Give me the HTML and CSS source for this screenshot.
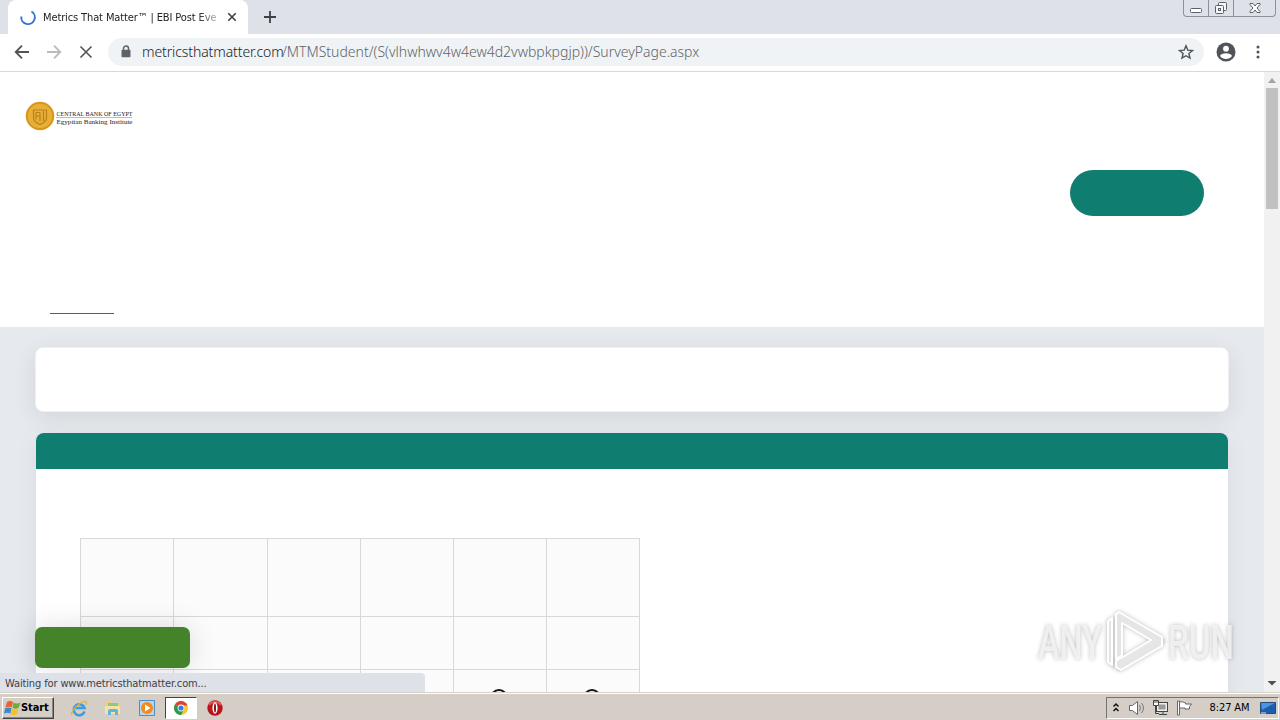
FILE: index.html
```html
<!DOCTYPE html>
<html lang="en">
<head>
    <meta charset="UTF-8">
    <title>Metrics That Matter™ | EBI Post Event</title>
    <link rel="stylesheet" href="styles.css">
</head>
<body>
    <div class="tabstrip">
        <div class="tab">
            <svg class="spinner" width="18" height="18" viewBox="0 0 18 18"><path d="M2.300 8.500A6.800 6.800 0 1 0 12.500 3.500" fill="none" stroke="#2f72d8" stroke-width="1.900"/></svg>
            <span class="tab-title">Metrics That Matter™ | EBI Post Eve</span>
            <svg width="10" height="10" viewBox="0 0 10 10"><path d="M1.300 1.300l7.400 7.400M8.700 1.300L1.300 8.700" stroke="#3c4043" stroke-width="1.600"/></svg>
        </div>
        <svg class="new-tab" width="12" height="12" viewBox="0 0 12 12"><path d="M6 0v12M0 6h12" stroke="#3c4043" stroke-width="1.800"/></svg>
        <div class="window-buttons">
            <span class="win-btn"><svg width="13" height="16" viewBox="0 0 13 16"><rect x="0.500" y="8.500" width="11" height="4" rx="1" fill="#fff" stroke="#596069"/></svg></span>
            <span class="win-btn"><svg width="14" height="16" viewBox="0 0 14 16"><g fill="#f5f6f8" stroke="#596069"><rect x="4.500" y="2.500" width="8" height="8" rx="1"/><rect x="1.500" y="5.500" width="8" height="8" rx="1"/><rect x="4.500" y="8.500" width="2" height="2"/></g></svg></span>
            <span class="win-btn close"><svg width="14" height="16" viewBox="0 0 14 16"><path d="M2 3.500h3l2 2.500 2-2.500h3v1L9 8l3 3.500v1H9L7 10l-2 2.500H2v-1L5 8 2 4.500z" fill="#fff" stroke="#596069"/></svg></span>
        </div>
    </div>

    <div class="toolbar">
        <svg width="16" height="16" viewBox="0 0 16 16"><path d="M15 8H2M8 1.700L1.700 8 8 14.300" fill="none" stroke="#505357" stroke-width="1.800"/></svg>
        <svg width="16" height="16" viewBox="0 0 16 16"><path d="M1 8h13M8 1.700L14.300 8 8 14.300" fill="none" stroke="#b9bbbe" stroke-width="1.800"/></svg>
        <svg width="16" height="16" viewBox="0 0 16 16"><path d="M2.500 2.500l11 11M13.500 2.500l-11 11" stroke="#505357" stroke-width="1.600"/></svg>
        <div class="omnibox">
            <svg width="10" height="13" viewBox="0 0 10 13"><path d="M2.500 6V3.500a2.500 2.500 0 0 1 5 0V6" fill="none" stroke="#5f6368" stroke-width="1.500"/><rect x="0.500" y="4.700" width="9" height="7.500" rx="1" fill="#5f6368"/></svg>
            <span class="url"><b>metricsthatmatter.com</b><i>/MTMStudent/(S(vlhwhwv4w4ew4d2vwbpkpgjp))/SurveyPage.aspx</i></span>
            <svg class="star" width="16" height="16" viewBox="0 0 16 16"><path d="M8 1.800l1.800 4.300 4.700.4-3.600 3 1.100 4.600L8 11.700l-4 2.400 1.100-4.600-3.600-3 4.700-.4z" fill="none" stroke="#505357" stroke-width="1.400"/></svg>
        </div>
        <svg class="avatar" width="20" height="20" viewBox="0 0 20 20"><circle cx="10" cy="10" r="9.500" fill="#505357"/><circle cx="10" cy="6.700" r="2.900" fill="#fff"/><path d="M4 14c1-3.600 11-3.600 12 0a7.500 7.500 0 0 1-12 0z" fill="#fff"/></svg>
        <svg class="menu" width="4" height="16" viewBox="0 0 4 16"><g fill="#505357"><circle cx="2" cy="3" r="1.500"/><circle cx="2" cy="8" r="1.500"/><circle cx="2" cy="13" r="1.500"/></g></svg>
    </div>

    <div class="viewport">
        <div class="page">
            <header class="site-header">
                <svg width="115" height="32" viewBox="0 0 115 32">
                    <circle cx="15" cy="16" r="14.300" fill="#d99a20"/>
                    <circle cx="15" cy="16" r="12.800" fill="#e8af36" stroke="#d4941f"/>
                    <path d="M8.500 10h13v8c0 3-3 5-6.500 6.500-3.500-1.500-6.500-3.500-6.500-6.500zM11 12.500h4M11 12.500v7M11 16h4M18.500 11v10M15 12.500V21" fill="none" stroke="#bd7f18" stroke-width="1.200"/>
                    <path d="M31 17.500h76" stroke="#aaa" stroke-width="0.800"/>
                    <text class="logo-text" x="31.500" y="15.500" textLength="76" lengthAdjust="spacingAndGlyphs">CENTRAL BANK OF EGYPT</text>
                    <text class="logo-text" x="31.500" y="24" textLength="76" lengthAdjust="spacingAndGlyphs">Egyptian Banking Institute</text>
                </svg>
            </header>
            <div class="actions"><span class="pill"></span></div>
            <div class="links"><span class="link-line"></span></div>
            <main class="survey">
                <div class="intro"></div>
                <section class="question">
                    <div class="question-head"></div>
                    <div class="grid">
                        <span></span><span></span><span></span><span></span><span></span><span></span>
                        <span></span><span></span><span></span><span></span><span></span><span></span>
                        <span></span><span></span><span></span><span></span><span><i class="radio"></i></span><span><i class="radio"></i></span>
                    </div>
                </section>
            </main>
        </div>
        <div class="scrollbar">
            <svg width="16" height="16" viewBox="0 0 16 16"><path d="M4 11l4-5 4 5z" fill="#a3a3a3"/></svg>
            <div class="thumb"></div>
            <svg class="down" width="16" height="16" viewBox="0 0 16 16"><path d="M3.500 5h9L8 9.500z" fill="#505050"/></svg>
        </div>
        <div class="floating-button"></div>
        <div class="status">Waiting for www.metricsthatmatter.com...</div>
        <svg class="watermark" width="204" height="72" viewBox="0 0 204 72">
            <g fill="none" stroke="#c8c8c8" stroke-opacity=".3" stroke-width="7" stroke-linejoin="round"><path d="M85 10l43 26-43 27zM76 15v40l6 7"/></g>
            <g fill="#fff" fill-opacity=".5" stroke="#fff" stroke-width="2" stroke-linejoin="round"><path d="M85 7l43 25v9L87 65l-5-3v-6l35-21-29-17v32l-6 4V9zM78 13l-4 3v41l4 3z"/></g>
            <text class="mark" x="4" y="54" textLength="64" lengthAdjust="spacingAndGlyphs">ANY</text>
            <text class="mark" x="134" y="54" textLength="66" lengthAdjust="spacingAndGlyphs">RUN</text>
        </svg>
    </div>

    <div class="taskbar">
        <div class="start">
            <svg width="17" height="16" viewBox="0 0 17 16"><path d="M3 2q3-2 6 0L7.800 7.500q-3-1.500-6.300 0z" fill="#e5652c"/><path d="M9.500 2.500q3 2 7 0L14.500 8q-3 1.500-6 0z" fill="#6fae35"/><path d="M1.200 8.300q3-1.500 6.300 0L6.300 13.500q-3-1.500-6.300 0z" fill="#3d87cf"/><path d="M8.200 8.800q3 1.500 6.100 0L12.800 14.500q-3 1.500-6 0z" fill="#f3c02f"/></svg>
            <span>Start</span>
        </div>
        <div class="quick">
            <svg width="18" height="18" viewBox="0 0 18 18"><path d="M14.500 12.500A5.500 5.500 0 1 1 14.500 9H5" fill="none" stroke="#3b9de0" stroke-width="2.500"/><path d="M2 16C-1 13 12 1 16 2.500c1 .5.500 2-.5 3.500" fill="none" stroke="#e1b53c" stroke-width="1.300"/></svg>
            <svg width="18" height="18" viewBox="0 0 18 18"><path d="M2 3h5l1 2h7v10H2z" fill="#efd076"/><path d="M4 4h10v4H4z" fill="#8fc690"/><path d="M1 7h15v8H1z" fill="#f7e3a0"/><path d="M4 16v-4q0-2 2-2h6q2 0 2 2v4h-3v-3H7v3z" fill="#62b4df"/></svg>
            <svg width="18" height="18" viewBox="0 0 18 18"><path d="M1.500 1.500h15v15h-15z" fill="#b4d8f3" stroke="#4f8dc5"/><circle cx="9" cy="9" r="6" fill="#f38b1c"/><path d="M7 5.500v7l5.500-3.500z" fill="#fff"/></svg>
            <span class="active-app">
                <svg width="16" height="16" viewBox="0 0 16 16"><circle cx="8" cy="8" r="7" fill="#f4c72d"/><path d="M8 8L1.940 4.500A7 7 0 0 1 14.060 4.500L14.500 5.500H8z" fill="#dc4334"/><path d="M1.940 4.500A7 7 0 0 0 8 15l3-5.500L8 8z" fill="#269b51"/><circle cx="8" cy="8" r="3.400" fill="#fff"/><circle cx="8" cy="8" r="2.600" fill="#3c7de0"/></svg>
            </span>
            <svg width="18" height="18" viewBox="0 0 18 18"><circle cx="9" cy="9" r="7.700" fill="#b8141c"/><path d="M3 6a7 6 0 0 1 12 0" fill="none" stroke="#e65a5c" stroke-width="2"/><ellipse cx="9" cy="9" rx="2.600" ry="5.800" fill="#fff"/><ellipse cx="9" cy="9" rx="1" ry="4.500" fill="#851016"/></svg>
        </div>
        <div class="tray">
            <svg width="8" height="12" viewBox="0 0 8 12"><path d="M1.500 4.500L4 2l2.500 2.500M1.500 9L4 6.500 6.500 9" fill="none" stroke="#111" stroke-width="1.500"/></svg>
            <svg class="sound" width="18" height="18" viewBox="0 0 18 18"><path d="M1.500 6.500h3l5-4v13l-5-4h-3z" fill="#fff" stroke="#666"/><path d="M11.500 6q2 3 0 6M13.500 4q4 5 0 10" fill="none" stroke="#777"/></svg>
            <svg class="network" width="18" height="18" viewBox="0 0 18 18"><rect x="4.500" y="3.500" width="11" height="9" fill="#eee" stroke="#444"/><path d="M6.500 5.500h7v5h-7z" fill="#999"/><path d="M7 15.500h8M11 13v2" stroke="#444"/><path d="M1.500 1.500h5v5h-5z" fill="#fff" stroke="#444"/><path d="M3.500 6.500v8H7" fill="none" stroke="#444"/><path d="M3 1v3M5 1v3" stroke="#444"/></svg>
            <svg class="flag" width="18" height="18" viewBox="0 0 18 18"><path d="M3.500 3v13h-2V2h2v1q3-1 6 1v1h6l-2 2.500 0 2.500H9V9H3.500" fill="#fff" stroke="#666"/></svg>
            <span class="clock">8:27 AM</span>
            <svg width="16" height="14" viewBox="0 0 16 14"><path d="M.5 1.500h15v11H.5z" fill="#1f5cab" stroke="#284a7b"/><path d="M1 2h14L2 9z" fill="#4b95de"/><path d="M1 12h5" stroke="#d6e4f3"/></svg>
        </div>
    </div>
</body>
</html>
```

FILE: styles.css
```css
* {
    margin: 0;
    padding: 0;
    box-sizing: border-box;
}

body {
    width: 1280px;
    height: 720px;
    display: flex;
    flex-direction: column;
    overflow: hidden;
    background: #fff;
    color: #222;
    font-family: "DejaVu Sans Condensed", "DejaVu Sans", sans-serif;
    font-size: 11px;
}

svg {
    display: block;
    flex-shrink: 0;
    overflow: visible;
}

/* browser chrome */
.tabstrip {
    height: 34px;
    display: flex;
    background: #dee1e8;
    padding-left: 8px;
}

.tab {
    width: 240px;
    height: 34px;
    display: flex;
    align-items: center;
    background: #fff;
    border-radius: 8px 8px 0 0;
    padding: 0 11px;
}

.tab-title {
    width: 176px;
    margin: 0 8px 0 6px;
    white-space: nowrap;
    letter-spacing: -0.12px;
    -webkit-mask-image: linear-gradient(to right, #000 155px, transparent 182px);
    mask-image: linear-gradient(to right, #000 155px, transparent 182px);
}

.new-tab {
    margin: 11px 0 0 16px;
}

.window-buttons {
    display: flex;
    height: 17px;
    margin: 0 4px 0 auto;
    border: 1px solid #8b929c;
    border-top: 0;
    border-radius: 0 0 4px 4px;
}

.win-btn {
    width: 25px;
    display: flex;
    justify-content: center;
    border-right: 1px solid #8b929c;
}

.win-btn.close {
    width: 41px;
    border-right: 0;
}

.toolbar {
    height: 38px;
    display: flex;
    align-items: center;
    gap: 16px;
    padding: 0 20px 2px 14px;
    border-bottom: 1px solid #d8d9db;
}

.omnibox {
    width: 1096px;
    height: 28px;
    display: flex;
    align-items: center;
    margin-left: -2px;
    padding: 0 10px 0 13px;
    border-radius: 14px;
    background: #f0f3f5;
}

.url {
    margin-left: 11px;
    font-family: "Noto Sans", sans-serif;
    font-size: 14px;
    font-weight: 300;
    white-space: nowrap;
}

.url b {
    font-weight: 300;
    color: #202124;
    display: inline-block;
    width: 140px;
    letter-spacing: -0.1px;
}

.url i {
    font-style: normal;
    color: #5f6368;
}

.star {
    margin-left: auto;
}

.avatar {
    margin-left: -4px;
}

.menu {
    margin-left: 4px;
}

/* page */
.viewport {
    height: 620px;
    display: flex;
    position: relative;
    overflow: hidden;
}

.page {
    width: 1264px;
}

.site-header {
    height: 88px;
    padding: 28px 25px;
}

.logo-text {
    font-family: "Liberation Serif", serif;
    font-size: 7px;
    fill: #222;
}

.actions {
    height: 153px;
    display: flex;
    justify-content: flex-end;
    padding: 10px 60px 0 0;
}

.pill {
    width: 134px;
    height: 46px;
    border-radius: 23px;
    background: #0f7d70;
}

.links {
    height: 14px;
    padding-left: 50px;
}

.link-line {
    display: block;
    width: 64px;
    height: 1px;
    background: #137c80;
}

.survey {
    height: 365px;
    padding: 20px 35px 0;
    background: #e6e9ed;
}

.intro {
    height: 65px;
    border: 1px solid #f0f0f4;
    border-radius: 8px;
    background: #fff;
    box-shadow: 0 5px 24px rgba(0, 0, 0, 0.09);
}

.question {
    height: 400px;
    margin: 21px 1px 0;
    border-radius: 8px 8px 0 0;
    background: #fff;
    box-shadow: 0 5px 24px rgba(0, 0, 0, 0.06);
}

.question-head {
    height: 36px;
    border-radius: 8px 8px 0 0;
    background: #0f7d70;
}

.grid {
    width: 560px;
    display: grid;
    grid-template-columns: 93px 94px 93px 93px 93px 93px;
    grid-template-rows: 78px 53px 70px;
    margin: 69px 0 0 44px;
    border-left: 1px solid #d8d8d8;
    border-top: 1px solid #d8d8d8;
    background: #fbfbfb;
}

.grid span {
    border-right: 1px solid #d8d8d8;
    border-bottom: 1px solid #d8d8d8;
}

.radio {
    display: block;
    width: 18px;
    height: 18px;
    margin: 19px 0 0 36px;
    border: 2px solid #111;
    border-radius: 50%;
    background: #fff;
}

.scrollbar {
    width: 16px;
    display: flex;
    flex-direction: column;
    background: #f1f1f1;
}

.thumb {
    width: 12px;
    height: 121px;
    margin-left: 2px;
    background: #c1c1c1;
}

.down {
    margin-top: auto;
}

/* layers over the page */
.floating-button {
    position: absolute;
    left: 35px;
    top: 555px;
    width: 155px;
    height: 41px;
    border-radius: 7px;
    background: #44832a;
    box-shadow: 0 0 28px rgba(0, 0, 0, 0.13);
}

.status {
    position: absolute;
    left: 0;
    bottom: 0;
    width: 425px;
    height: 19px;
    padding-left: 5px;
    line-height: 21px;
    letter-spacing: -0.13px;
    border-radius: 0 4px 0 0;
    background: #dee1e8;
    color: #3c4043;
}

.watermark {
    position: absolute;
    left: 1034px;
    top: 533px;
    filter: drop-shadow(0 0 2px rgba(0, 0, 0, 0.3));
}

.mark {
    font-family: Roboto, sans-serif;
    font-size: 49px;
    font-weight: 500;
    fill: #f5f5f5;
    fill-opacity: 0.85;
}

/* taskbar */
.taskbar {
    height: 28px;
    display: flex;
    align-items: center;
    border-top: 1px solid #d5d0c8;
    box-shadow: inset 0 1px #fff;
    background: #d5cec6;
    padding: 2px 1px 0 2px;
}

.start {
    width: 52px;
    height: 22px;
    display: flex;
    align-items: center;
    padding-left: 1px;
    border: 1px solid;
    border-color: #fff #444 #444 #fff;
    box-shadow: inset -1px -1px #8b867e;
    color: #000;
    font-weight: bold;
    letter-spacing: -0.1px;
}

.quick {
    display: flex;
    align-items: center;
    gap: 16px;
    margin-left: 16px;
}

.active-app {
    width: 32px;
    height: 22px;
    display: flex;
    align-items: center;
    justify-content: center;
    margin: 0 -7px;
    border: 1px solid;
    border-color: #444 #fff #fff #444;
    background: #fff;
}

.tray {
    width: 173px;
    height: 22px;
    display: flex;
    align-items: center;
    margin-left: auto;
    padding: 0 2px 0 5px;
    border: 1px solid;
    border-color: #77726c #fff #fff #77726c;
    color: #000;
}

.sound {
    margin-left: 8px;
}

.network {
    margin-left: 6px;
}

.flag {
    margin-left: 6px;
}

.clock {
    margin: 0 auto;
    padding-left: 5px;
    white-space: nowrap;
    letter-spacing: -0.1px;
}
```
